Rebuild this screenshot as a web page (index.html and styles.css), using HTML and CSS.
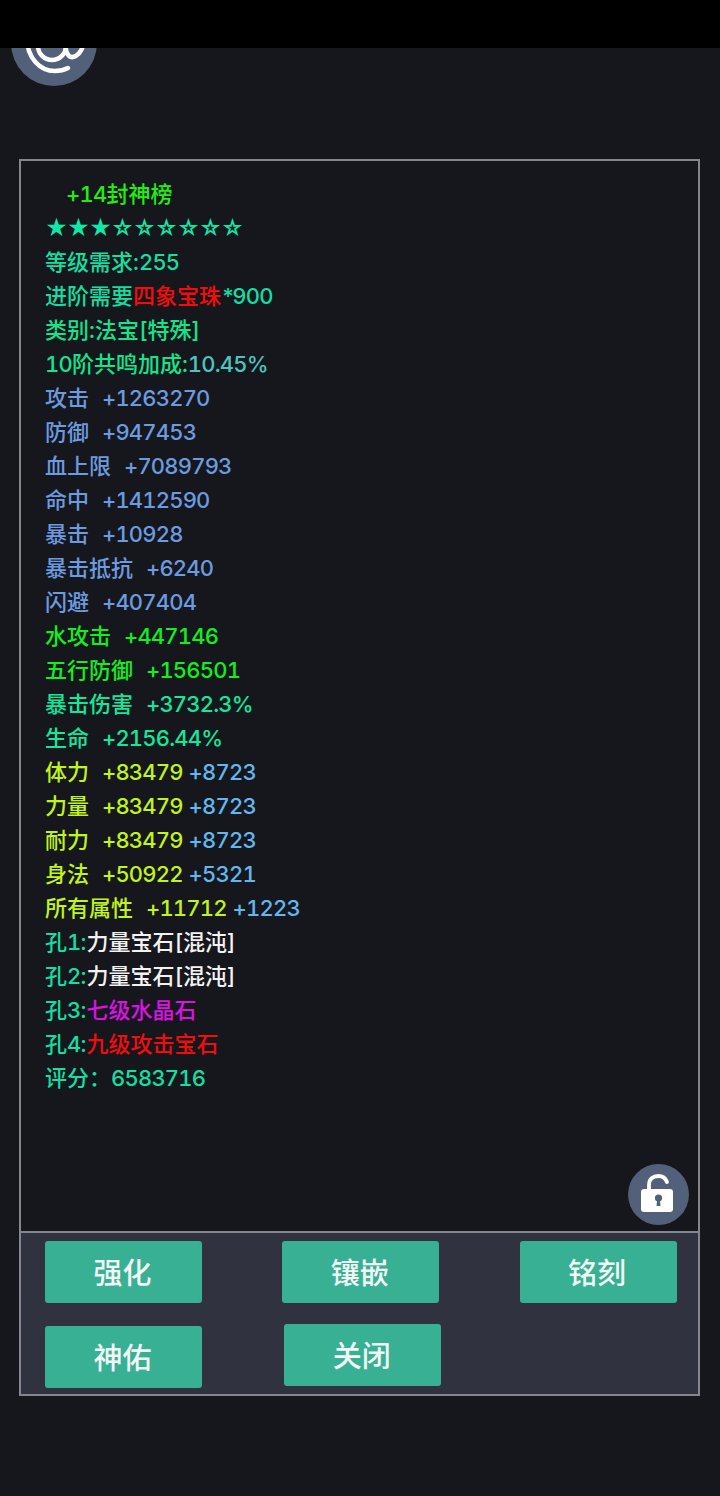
FILE: index.html
```html
<!DOCTYPE html>
<html lang="zh-CN">
<head>
    <meta charset="UTF-8">
    <meta name="viewport" content="width=device-width, initial-scale=1.0">
    <title>+14封神榜</title>
    <link rel="stylesheet" href="styles.css">
</head>
<body>
    <div class="top-bar"></div>
    <div class="avatar">
        <svg viewBox="0 0 86 86" width="86" height="86" fill="none" stroke="#fff" stroke-width="4.500" stroke-linecap="round">
            <path d="M16 38C16 58 29 71 44 71C49 71 53 70 57 68"/>
            <circle cx="41" cy="46" r="14"/>
            <path d="M54 38C54 52 57 58 62 57C66 56 70 52 72 46"/>
        </svg>
    </div>
    <div class="panel">
        <div class="info">
            <div class="line title"><span class="num">+14</span>封神榜</div>
            <div class="line stars">★★★☆☆☆☆☆☆</div>
            <div class="line teal">等级需求:<span class="num">255</span></div>
            <div class="line teal">进阶需要<span class="red">四象宝珠</span><span class="star-mark">*</span><span class="num">900</span></div>
            <div class="line spring">类别:法宝[特殊]</div>
            <div class="line spring"><span class="num">10</span>阶共鸣加成:<span class="aqua num">10.45%</span></div>
            <div class="line blue">攻击 <span class="val num">+1263270</span></div>
            <div class="line blue">防御 <span class="val num">+947453</span></div>
            <div class="line blue">血上限 <span class="val num">+7089793</span></div>
            <div class="line blue">命中 <span class="val num">+1412590</span></div>
            <div class="line blue">暴击 <span class="val num">+10928</span></div>
            <div class="line blue">暴击抵抗 <span class="val num">+6240</span></div>
            <div class="line blue">闪避 <span class="val num">+407404</span></div>
            <div class="line green">水攻击 <span class="val num">+447146</span></div>
            <div class="line green">五行防御 <span class="val num">+156501</span></div>
            <div class="line mint">暴击伤害 <span class="val num">+3732.3%</span></div>
            <div class="line mint">生命 <span class="val num">+2156.44%</span></div>
            <div class="line lime">体力 <span class="val num">+83479</span> <span class="sky num">+8723</span></div>
            <div class="line lime">力量 <span class="val num">+83479</span> <span class="sky num">+8723</span></div>
            <div class="line lime">耐力 <span class="val num">+83479</span> <span class="sky num">+8723</span></div>
            <div class="line lime">身法 <span class="val num">+50922</span> <span class="sky num">+5321</span></div>
            <div class="line lime">所有属性 <span class="val num">+11712</span> <span class="sky num">+1223</span></div>
            <div class="line teal">孔<span class="num">1</span>:<span class="white">力量宝石[混沌]</span></div>
            <div class="line teal">孔<span class="num">2</span>:<span class="white">力量宝石[混沌]</span></div>
            <div class="line teal">孔<span class="num">3</span>:<span class="purple">七级水晶石</span></div>
            <div class="line teal">孔<span class="num">4</span>:<span class="red">九级攻击宝石</span></div>
            <div class="line teal">评分：<span class="num">6583716</span></div>
            <div class="lock">
                <svg viewBox="0 0 61 61" width="61" height="61">
                    <path d="M21 27v-6c0-6 4-9 9.500-9 4 0 7 2 8.500 6" fill="none" stroke="#fff" stroke-width="3.800" stroke-linecap="round"/>
                    <path d="M16 25h26a3 3 0 0 1 3 3v17a3 3 0 0 1-3 3H16a3 3 0 0 1-3-3V28a3 3 0 0 1 3-3z" fill="#fff"/>
                    <circle cx="30.500" cy="34" r="3.600" fill="#526079"/>
                    <path d="M29.200 35h2.600l.7 7h-4z" fill="#526079"/>
                </svg>
            </div>
        </div>
        <div class="actions">
            <button class="btn">强化</button>
            <button class="btn">镶嵌</button>
            <button class="btn">铭刻</button>
            <button class="btn">神佑</button>
            <button class="btn btn-close">关闭</button>
        </div>
    </div>
</body>
</html>
```

FILE: styles.css
```css
html, body {
    margin: 0;
    padding: 0;
}
body {
    width: 720px;
    height: 1496px;
    position: relative;
    overflow: hidden;
    background-color: #16171c;
    font-family: Inter, "Noto Sans CJK SC", sans-serif;
    font-size: 22px;
    font-weight: 500;
    font-variant-numeric: tabular-nums;
}
.top-bar {
    height: 48px;
    background-color: #000;
    position: relative;
    z-index: 2;
}
.avatar {
    position: absolute;
    left: 11px;
    top: 0;
    width: 86px;
    height: 86px;
    border-radius: 50%;
    background-color: #526079;
}
.panel {
    box-sizing: border-box;
    width: 681px;
    height: 1237px;
    margin: 111px 0 0 19px;
    border: 2px solid #85868b;
    display: flex;
    flex-direction: column;
}
.info {
    position: relative;
    flex: 1;
    padding: 16px 24px 0;
}
.line {
    height: 34px;
    line-height: 34px;
    white-space: pre;
}
.num {
    letter-spacing: -0.800px;
}
.star-mark {
    letter-spacing: -3px;
}
.val {
    margin-left: 7px;
}
.title {
    padding-left: 21px;
    color: #20f010;
}
.stars {
    color: #0fe8a8;
    letter-spacing: -1px;
}
.teal { color: #12dfa2; }
.spring { color: #14e48c; }
.aqua { color: #4cc4c0; }
.blue { color: #6c9be0; }
.green { color: #10f020; }
.mint { color: #12e89c; }
.lime { color: #c0f41a; }
.sky { color: #62b8ee; }
.red { color: #f40c0c; }
.white { color: #f2f2f2; }
.purple { color: #dc12e4; }
.lock {
    position: absolute;
    right: 9px;
    bottom: 6px;
    width: 61px;
    height: 61px;
    border-radius: 50%;
    background-color: #526079;
}
.actions {
    box-sizing: border-box;
    height: 163px;
    border-top: 2px solid #85868b;
    background-color: #30333f;
    padding: 8px 0 0 24px;
    display: grid;
    grid-template-columns: repeat(3, 157px);
    grid-auto-rows: 62px;
    column-gap: 80.250px;
    row-gap: 23px;
}
.btn {
    border: none;
    border-radius: 3px;
    background-color: #38b094;
    color: #f2f7f5;
    font-family: inherit;
    font-size: 29px;
    font-weight: 500;
    padding: 0 2px 2px 0;
}
.btn-close {
    position: relative;
    left: 2px;
    top: -2px;
}
```
